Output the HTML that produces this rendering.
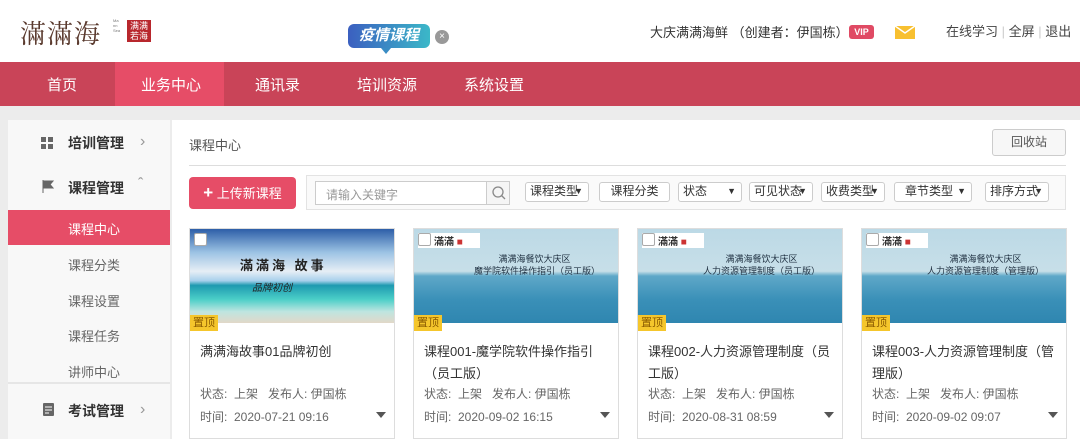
<!DOCTYPE html><html><head><meta charset="utf-8"><style>
*{margin:0;padding:0;box-sizing:border-box}
body{width:1080px;height:439px;overflow:hidden;background:#ececec;font-family:"Liberation Sans","Noto Sans CJK SC",sans-serif;position:relative;color:#333}
.a{position:absolute;white-space:nowrap}
.nav{top:62px;left:0;width:1080px;height:44px;background:#c94458}
.nav span{position:absolute;top:12px;color:#fff;font-size:15px}
.side{left:8px;top:120px;width:162px;height:319px;background:#f8f8f8}
.main{left:172px;top:120px;width:908px;height:319px;background:#fff}
.sel{position:absolute;top:182px;height:20px;border:1px solid #ccc;border-radius:3px;font-size:12px;line-height:17px;padding:0 4px;color:#333;background:#fff;white-space:nowrap;overflow:hidden}
.sel i{font-style:normal;font-size:9px;position:absolute;right:5px;top:0}
.card{position:absolute;top:228px;width:206px;height:211px;border:1px solid #ddd;background:#fff}
.img{position:absolute;left:0;top:0;width:204px;height:94px}
.top{position:absolute;left:0;top:86px;background:#f5c62c;color:#8a5a00;font-size:11px;padding:0 3px;height:16px;line-height:16px}
.cb{position:absolute;left:4px;top:4px;width:13px;height:13px;background:#fff;border:1px solid #aaa;border-radius:2px}
.t{position:absolute;left:10px;top:112px;font-size:13px;line-height:22px;color:#333;white-space:normal;width:190px}
.s{position:absolute;left:10px;top:156px;font-size:12px;color:#666}
.tm{position:absolute;left:10px;top:179px;font-size:12px;color:#666}
.tri{position:absolute;right:8px;top:183px;border:5px solid transparent;border-top:6px solid #555}
.sea{background:linear-gradient(#bcd9e6 0%,#c7dfe8 45%,#5fa8c8 50%,#3a90b8 75%,#2f86b0 100%)}
.si{position:absolute;left:60px;font-size:13px;color:#666}
</style></head><body>
<div class="a" style="left:0;top:0;width:1080px;height:62px;background:#fff"></div>
<div class="a" style="left:20px;top:14px;font-size:26px;color:#5a3a2e;letter-spacing:1px;font-family:'Noto Serif CJK SC',serif">滿滿海</div>
<div class="a" style="left:113px;top:18px;width:8px;height:24px;font-size:4px;color:#777;line-height:5px;white-space:normal">Ma nn Sea</div>
<div class="a" style="left:127px;top:20px;width:24px;height:22px;background:#b8272d;color:#fff;font-size:9px;line-height:10px;text-align:center;padding-top:1px">满满<br>若海</div>
<div class="a" style="left:348px;top:24px;width:82px;height:24px;border-radius:6px;background:linear-gradient(90deg,#3b5fc0,#3bb8c8);color:#fff;font-size:15px;font-weight:bold;font-style:italic;text-align:center;line-height:24px">疫情课程</div>
<div class="a" style="left:381px;top:48px;border:5px solid transparent;border-top:6px solid #3a8cc4"></div>
<div class="a" style="left:435px;top:30px;width:14px;height:14px;border-radius:50%;background:#999;color:#fff;font-size:10px;text-align:center;line-height:14px">×</div>
<div class="a" style="left:650px;top:22px;font-size:13px">大庆满满海鲜 （创建者：伊国栋）</div>
<div class="a" style="left:849px;top:25px;width:25px;height:14px;background:#e04a64;border-radius:3px;color:#fff;font-size:9px;font-weight:bold;text-align:center;line-height:14px">VIP</div>
<div class="a" style="left:895px;top:26px;width:20px;height:13px;background:#f8c030"><svg width="20" height="13"><path d="M0 0 L10 7 L20 0" stroke="#fff" stroke-width="1.5" fill="none"/></svg></div>
<div class="a" style="left:946px;top:21px;font-size:13px;color:#444">在线学习 <span style="color:#ccc">|</span> 全屏 <span style="color:#ccc">|</span> 退出</div>
<div class="a nav"><div style="position:absolute;left:115px;top:0;width:109px;height:44px;background:#e64d67"></div>
<span style="left:47px">首页</span><span style="left:141px">业务中心</span><span style="left:255px">通讯录</span><span style="left:357px">培训资源</span><span style="left:464px">系统设置</span></div>
<div class="a side">
<svg style="position:absolute;left:33px;top:17px" width="12" height="12"><rect x="0" y="0" width="5" height="5" fill="#666"/><rect x="7" y="0" width="5" height="5" fill="#666"/><rect x="0" y="7" width="5" height="5" fill="#666"/><rect x="7" y="7" width="5" height="5" fill="#666"/></svg>
<div class="a" style="left:60px;top:13px;font-size:14px;font-weight:bold">培训管理</div><div class="a" style="left:132px;top:13px;color:#999">›</div>
<svg style="position:absolute;left:34px;top:60px" width="12" height="13"><path d="M1 0V13M1 1H11L8 4.5L11 8H1" fill="#666" stroke="#666"/></svg>
<div class="a" style="left:60px;top:58px;font-size:14px;font-weight:bold">课程管理</div><div class="a" style="left:130px;top:56px;color:#999">ˆ</div>
<div class="a" style="left:0;top:90px;width:162px;height:35px;background:#e64d67"></div>
<div class="si" style="top:99px;color:#fff">课程中心</div>
<div class="si" style="top:135px">课程分类</div><div class="si" style="top:171px">课程设置</div><div class="si" style="top:206px">课程任务</div><div class="si" style="top:242px">讲师中心</div>
<div class="a" style="left:0;top:262px;width:162px;height:2px;background:#e6e6e6"></div>
<svg style="position:absolute;left:35px;top:283px" width="11" height="13"><rect width="11" height="13" rx="1" fill="#666"/><path d="M2 4H9M2 7H9M2 10H6" stroke="#fff"/></svg>
<div class="a" style="left:60px;top:281px;font-size:14px;font-weight:bold">考试管理</div><div class="a" style="left:132px;top:281px;color:#999">›</div>
</div>
<div class="a main"></div>
<div class="a" style="left:189px;top:135px;font-size:13px;color:#555">课程中心</div>
<div class="a" style="left:992px;top:129px;width:74px;height:27px;border:1px solid #ccc;border-radius:3px;background:#f7f7f7;font-size:12px;text-align:center;line-height:25px;color:#555">回收站</div>
<div class="a" style="left:189px;top:165px;width:877px;height:1px;background:#ddd"></div>
<div class="a" style="left:189px;top:177px;width:107px;height:32px;background:#e64d67;border-radius:4px;color:#fff;font-size:13px;text-align:center;line-height:32px"><b style="font-size:17px">+</b> 上传新课程</div>
<div class="a" style="left:306px;top:175px;width:760px;height:35px;border:1px solid #e3e3e3;background:#fafafa"></div>
<div class="a" style="left:315px;top:181px;width:195px;height:24px;border:1px solid #ccc;background:#fff;font-size:12px;color:#999;padding:4px 10px">请输入关键字</div>
<div class="a" style="left:486px;top:182px;width:23px;height:22px;border-left:1px solid #ccc;background:#f5f5f5"><svg width="23" height="22"><circle cx="11" cy="10" r="5" stroke="#888" fill="none" stroke-width="1.3"/><path d="M14.5 13.5L18 17" stroke="#888" stroke-width="1.3"/></svg></div>
<div class="sel" style="left:525px;width:64px">课程类型<i>▼</i></div>
<div class="sel" style="left:599px;width:71px;text-align:center">课程分类</div>
<div class="sel" style="left:678px;width:64px">状态<i>▼</i></div>
<div class="sel" style="left:749px;width:64px">可见状态<i>▼</i></div>
<div class="sel" style="left:821px;width:64px">收费类型<i>▼</i></div>
<div class="sel" style="left:894px;width:78px;padding-left:10px">章节类型<i>▼</i></div>
<div class="sel" style="left:985px;width:64px">排序方式<i>▼</i></div>

<div class="card" style="left:189px"><div class="img" style="background:linear-gradient(#2d5ea8 0%,#9cc3e4 25%,#e6eef5 45%,#a8d0ec 55%,#1e9ab0 60%,#4ccfc8 75%,#bfe5e0 88%,#e2d8c8 100%)"></div>
<div class="a" style="left:50px;top:26px;font-size:13px;font-weight:bold;color:#222;letter-spacing:3px">滿滿海 故事</div><div class="a" style="left:62px;top:50px;font-size:10px;color:#222;font-style:italic">品牌初创</div>
<div class="cb"></div><div class="top">置顶</div><div class="t">满满海故事01品牌初创</div><div class="s">状态:&nbsp; 上架 &nbsp;&nbsp;发布人: 伊国栋</div><div class="tm">时间:&nbsp; 2020-07-21 09:16</div><div class="tri"></div></div>

<div class="card" style="left:413px"><div class="img sea"></div><div class="a" style="left:4px;top:4px;width:62px;height:15px;background:#fff;font-size:10px;padding-left:16px;font-weight:bold">滿滿 <span style="color:#c33">■</span></div>
<div class="a" style="left:55px;top:24px;font-size:9px;text-align:center;line-height:12px;color:#234">满满海餐饮大庆区<br>&nbsp;&nbsp;魔学院软件操作指引（员工版）</div>
<div class="cb"></div><div class="top">置顶</div><div class="t">课程001-魔学院软件操作指引（员工版）</div><div class="s">状态:&nbsp; 上架 &nbsp;&nbsp;发布人: 伊国栋</div><div class="tm">时间:&nbsp; 2020-09-02 16:15</div><div class="tri"></div></div>

<div class="card" style="left:637px"><div class="img sea"></div><div class="a" style="left:4px;top:4px;width:62px;height:15px;background:#fff;font-size:10px;padding-left:16px;font-weight:bold">滿滿 <span style="color:#c33">■</span></div>
<div class="a" style="left:65px;top:24px;font-size:9px;text-align:center;line-height:12px;color:#234">满满海餐饮大庆区<br>人力资源管理制度（员工版）</div>
<div class="cb"></div><div class="top">置顶</div><div class="t">课程002-人力资源管理制度（员工版）</div><div class="s">状态:&nbsp; 上架 &nbsp;&nbsp;发布人: 伊国栋</div><div class="tm">时间:&nbsp; 2020-08-31 08:59</div><div class="tri"></div></div>

<div class="card" style="left:861px"><div class="img sea"></div><div class="a" style="left:4px;top:4px;width:62px;height:15px;background:#fff;font-size:10px;padding-left:16px;font-weight:bold">滿滿 <span style="color:#c33">■</span></div>
<div class="a" style="left:65px;top:24px;font-size:9px;text-align:center;line-height:12px;color:#234">满满海餐饮大庆区<br>人力资源管理制度（管理版）</div>
<div class="cb"></div><div class="top">置顶</div><div class="t">课程003-人力资源管理制度（管理版）</div><div class="s">状态:&nbsp; 上架 &nbsp;&nbsp;发布人: 伊国栋</div><div class="tm">时间:&nbsp; 2020-09-02 09:07</div><div class="tri"></div></div>
</body></html>
